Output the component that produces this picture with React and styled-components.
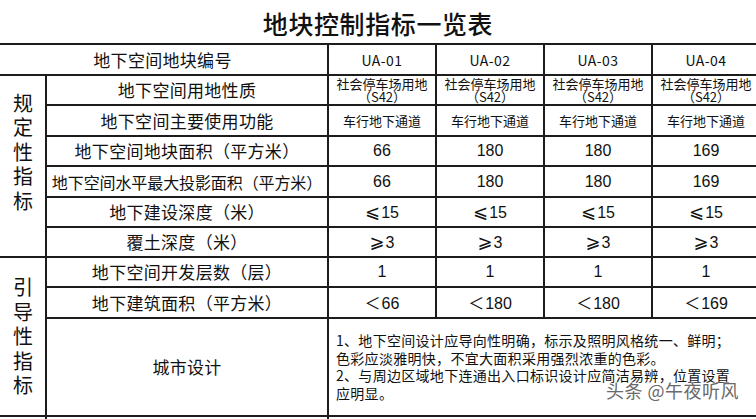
import React from 'react';
import styled, { createGlobalStyle } from 'styled-components';

const Global = createGlobalStyle`
  html, body { margin: 0; padding: 0; background: #fff; }
  body { font-family: "Noto Sans CJK SC", "Noto Sans", sans-serif; color: #111; }
`;

const Page = styled.div`
  width: 756px;
  height: 419px;
  overflow: hidden;
  position: relative;
  background: #fff;
`;

const Title = styled.h1`
  margin: 0;
  height: 43px;
  padding-top: 2px;
  box-sizing: border-box;
  display: flex;
  align-items: center;
  justify-content: center;
  font-size: 25px;
  line-height: 30px;
  font-weight: 500;
  letter-spacing: 0.6px;
  color: #111;
`;

const Table = styled.table`
  border-collapse: collapse;
  table-layout: fixed;
  width: 763px;
  margin-left: -4px;
`;

const Row = styled.tr`
  height: ${(p) => p.$h}px;
`;

const Cell = styled.td`
  border: 2px solid #1c1c1c;
  padding: 0;
  text-align: center;
  vertical-align: middle;
  white-space: nowrap;
  line-height: 20px;
`;

const GroupCell = styled(Cell)`
  font-size: 20px;
  padding-bottom: ${(p) => p.$lift || 0}px;
`;

const GroupChars = styled.div`
  display: flex;
  flex-direction: column;
  align-items: center;
  line-height: 24.5px;
  padding-left: 3px;
`;

const LabelCell = styled(Cell)`
  font-size: ${(p) => (p.$tight ? 16 : 17)}px;
  letter-spacing: ${(p) => (p.$tight ? '-0.1px' : '0.3px')};
`;

const CodeCell = styled(Cell)`
  font-size: 14px;
  letter-spacing: 0.4px;
`;

const UseCell = styled(Cell)`
  font-size: 13px;
  line-height: 13.5px;
`;

const NumCell = styled(Cell)`
  font-family: "Liberation Sans", "DejaVu Sans", "Noto Sans CJK SC", sans-serif;
  font-size: 16px;
`;

const Sym = styled.span`
  font-family: ${(p) => (p.$cjk ? '"Noto Sans CJK SC"' : '"DejaVu Sans"')}, sans-serif;
  font-size: ${(p) => (p.$cjk ? 16 : 18)}px;
  margin-right: 1px;
`;

const TextCell = styled(Cell)`
  text-align: left;
  padding-left: 7px;
  font-size: 14px;
  line-height: 17.5px;
  letter-spacing: 0.3px;
`;

const Line = styled.span`
  display: block;
`;

const Watermark = styled.div`
  position: absolute;
  left: 606px;
  top: 380px;
  font-size: 18px;
  line-height: 20px;
  color: #6a6a6a;
  letter-spacing: 0.5px;
  text-shadow: 0 0 2px #fff, 0 0 2px #fff;
  pointer-events: none;
`;

const codes = ['UA-01', 'UA-02', 'UA-03', 'UA-04'];

const numRows = [
  { label: '地下空间地块面积（平方米）', vals: ['66', '180', '180', '169'] },
  { label: '地下空间水平最大投影面积（平方米）', vals: ['66', '180', '180', '169'], tight: true },
];

function Chars({ text }) {
  return (
    <GroupChars>
      {text.split('').map((c, i) => (
        <span key={i}>{c}</span>
      ))}
    </GroupChars>
  );
}

export default function App() {
  return (
    <Page>
      <Global />
      <Title>地块控制指标一览表</Title>
      <Table>
        <colgroup>
          <col style={{ width: 49 }} />
          <col style={{ width: 282 }} />
          <col style={{ width: 108 }} />
          <col style={{ width: 108 }} />
          <col style={{ width: 108 }} />
          <col style={{ width: 108 }} />
        </colgroup>
        <tbody>
          <Row $h={31}>
            <LabelCell colSpan={2}>地下空间地块编号</LabelCell>
            {codes.map((c) => (
              <CodeCell key={c}>{c}</CodeCell>
            ))}
          </Row>
          <Row $h={30}>
            <GroupCell rowSpan={6} $lift={28}>
              <Chars text="规定性指标" />
            </GroupCell>
            <LabelCell>地下空间用地性质</LabelCell>
            {codes.map((c) => (
              <UseCell key={c}>
                <Line>社会停车场用地</Line>
                <Line>（S42）</Line>
              </UseCell>
            ))}
          </Row>
          <Row $h={31}>
            <LabelCell>地下空间主要使用功能</LabelCell>
            {codes.map((c) => (
              <UseCell key={c}>车行地下通道</UseCell>
            ))}
          </Row>
          {numRows.map((r, i) => (
            <Row key={r.label} $h={i === 0 ? 30 : 31}>
              <LabelCell $tight={r.tight}>{r.label}</LabelCell>
              {r.vals.map((v, j) => (
                <NumCell key={j}>{v}</NumCell>
              ))}
            </Row>
          ))}
          <Row $h={30}>
            <LabelCell>地下建设深度（米）</LabelCell>
            {codes.map((c) => (
              <NumCell key={c}>
                <Sym>⩽</Sym>15
              </NumCell>
            ))}
          </Row>
          <Row $h={30}>
            <LabelCell>覆土深度（米）</LabelCell>
            {codes.map((c) => (
              <NumCell key={c}>
                <Sym>⩾</Sym>3
              </NumCell>
            ))}
          </Row>
          <Row $h={30}>
            <GroupCell rowSpan={3}>
              <Chars text="引导性指标" />
            </GroupCell>
            <LabelCell>地下空间开发层数（层）</LabelCell>
            {codes.map((c) => (
              <NumCell key={c}>1</NumCell>
            ))}
          </Row>
          <Row $h={31}>
            <LabelCell>地下建筑面积（平方米）</LabelCell>
            {['66', '180', '180', '169'].map((v, j) => (
              <NumCell key={j}>
                <Sym $cjk>＜</Sym>
                {v}
              </NumCell>
            ))}
          </Row>
          <Row $h={98}>
            <LabelCell>城市设计</LabelCell>
            <TextCell colSpan={4}>
              <Line>1、地下空间设计应导向性明确，标示及照明风格统一、鲜明；</Line>
              <Line>色彩应淡雅明快，不宜大面积采用强烈浓重的色彩。</Line>
              <Line>2、与周边区域地下连通出入口标识设计应简洁易辨，位置设置</Line>
              <Line>应明显。</Line>
            </TextCell>
          </Row>
          <Row $h={30}>
            <GroupCell />
            <LabelCell />
            <TextCell colSpan={4} />
          </Row>
        </tbody>
      </Table>
      <Watermark>头条 @午夜听风</Watermark>
    </Page>
  );
}
